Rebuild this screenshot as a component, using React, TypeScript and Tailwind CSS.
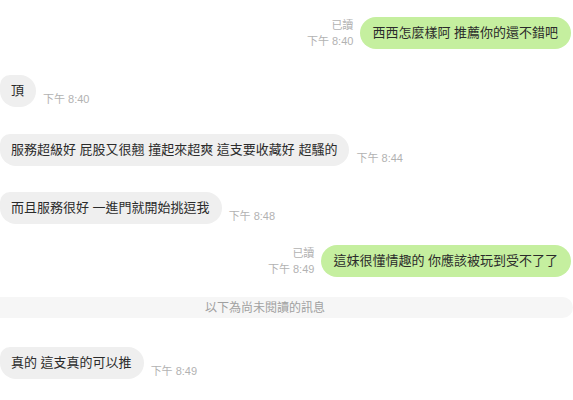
import React from "react";

const font = { fontFamily: '"Liberation Sans", "Noto Sans CJK TC", sans-serif' };

function Right({ text, time, className }: { text: string; time: string; className: string }) {
  return (
    <div className={`flex justify-end items-end gap-[7px] pr-[2px] ${className}`}>
      <div className="flex flex-col items-end text-[11px] leading-[16px] text-[#b2b2b2]">
        <span>已讀</span>
        <span>{time}</span>
      </div>
      <div className="h-8 flex items-center pl-[12px] pr-[13px] rounded-[16px] bg-[#c5ef9f] text-[13px] text-[#2b2b2b] whitespace-nowrap">
        {text}
      </div>
    </div>
  );
}

function Left({ text, time, className }: { text: string; time: string; className: string }) {
  return (
    <div className={`flex items-end gap-[7px] ${className}`}>
      <div className="h-8 flex items-center pl-[11px] pr-[12px] rounded-[16px] rounded-tl-[10px] bg-[#efefef] text-[13px] text-[#2b2b2b] whitespace-nowrap">
        {text}
      </div>
      <span className="text-[11px] leading-[15px] text-[#b2b2b2] whitespace-nowrap">{time}</span>
    </div>
  );
}

export default function App() {
  return (
    <div className="w-[573px] h-[400px] bg-white flex flex-col overflow-hidden" style={font}>
      <Right className="mt-[17px]" text="西西怎麼樣阿 推薦你的還不錯吧" time="下午 8:40" />
      <Left className="mt-[26px]" text="頂" time="下午 8:40" />
      <Left className="mt-[27px]" text="服務超級好 屁股又很翹 撞起來超爽 這支要收藏好 超騷的" time="下午 8:44" />
      <Left className="mt-[26px]" text="而且服務很好 一進門就開始挑逗我" time="下午 8:48" />
      <Right className="mt-[21px]" text="這妹很懂情趣的 你應該被玩到受不了了" time="下午 8:49" />
      <div className="mt-[20px] h-[21px] flex items-center justify-center pr-[43px] rounded-r-full bg-[#f6f6f6] text-[12px] text-[#a0a0a0]">
        以下為尚未閱讀的訊息
      </div>
      <Left className="mt-[29px]" text="真的 這支真的可以推" time="下午 8:49" />
    </div>
  );
}
